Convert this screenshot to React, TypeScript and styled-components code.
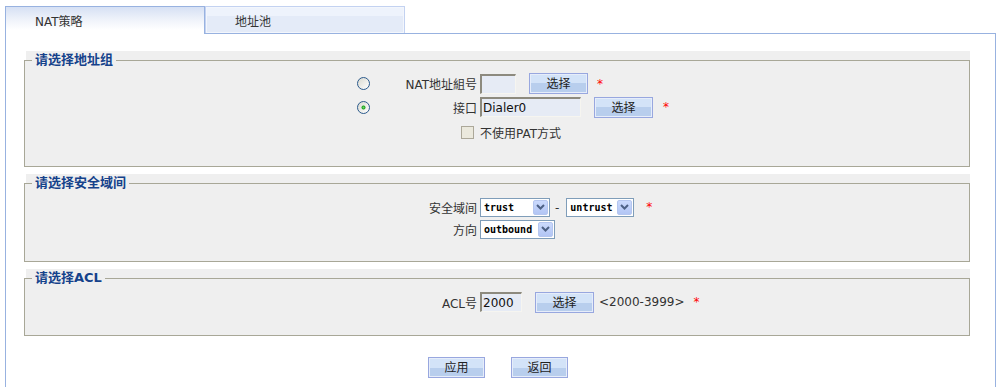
import React from 'react';
import styled, { createGlobalStyle } from 'styled-components';

const GlobalStyle = createGlobalStyle`
  html, body {
    margin: 0;
    padding: 0;
    overflow: hidden;
    background: #fff;
  }
  body {
    font-family: "DejaVu Sans", "Noto Sans CJK SC", sans-serif;
    font-size: 12px;
    color: #333;
  }
`;

const Page = styled.div`
  padding-top: 6px;
`;

const TabBar = styled.div`
  display: flex;
  height: 27px;
  padding-left: 5px;
`;

const Tab = styled.div<{ $active?: boolean }>`
  box-sizing: border-box;
  width: 200px;
  height: ${p => (p.$active ? '28px' : '27px')};
  padding-left: ${p => (p.$active ? '29px' : '29px')};
  border: 1px solid ${p => (p.$active ? '#98b2e0' : '#c3d2f1')};
  border-bottom: none;
  display: flex;
  align-items: center;
  position: relative;
  z-index: 1;
  color: #333;
  background: ${p =>
    p.$active
      ? 'linear-gradient(#d6e0f4 0%, #eef2fa 45%, #ffffff 85%)'
      : 'linear-gradient(#eef3fc 0 33%, #e4ebf8 33% 100%)'};
  box-shadow: ${p => (p.$active ? 'none' : 'inset 0 0 0 1px #f3f6fc')};
`;

const Panel = styled.div`
  box-sizing: border-box;
  width: 991px;
  margin-left: 5px;
  border: 1px solid #98b2e0;
  padding: 17px 25px 30px 20px;
`;

const Section = styled.div`
  background: #efefef;
  margin-bottom: 7px;
`;

const Fieldset = styled.fieldset<{ $pt: number; $pb: number }>`
  margin: 0 0 0 -2px;
  min-width: 0;
  padding: ${p => p.$pt}px 0 ${p => p.$pb}px 0;
  border: 1px solid #a8a797;
  background: #efefef;
`;

const Legend = styled.legend`
  margin-left: 7px;
  padding: 0 3px;
  font-size: 13px;
  line-height: 18px;
  font-weight: bold;
  color: #15428b;
`;

const Row = styled.div<{ $radio?: boolean; $h: number }>`
  display: grid;
  grid-template-columns: ${p => (p.$radio ? '332px 13px 110px 1fr' : '455px 1fr')};
  align-items: center;
  height: ${p => p.$h}px;
`;

const Label = styled.div<{ $pr?: number }>`
  text-align: right;
  padding-right: ${p => p.$pr ?? 3}px;
  white-space: nowrap;
  display: flex;
  justify-content: flex-end;
  align-items: center;
`;

const Controls = styled.div`
  display: flex;
  align-items: center;
  white-space: nowrap;
`;

const Radio = styled.span<{ $checked?: boolean }>`
  box-sizing: border-box;
  width: 13px;
  height: 13px;
  border-radius: 50%;
  border: 1px solid #2b5a8c;
  background: ${p =>
    p.$checked
      ? 'radial-gradient(circle, #6ada6a 0, #21a121 1.6px, transparent 2.4px), linear-gradient(135deg, #d9d9d0, #ffffff)'
      : 'linear-gradient(135deg, #d9d9d0, #ffffff)'};
`;

const Checkbox = styled.span`
  box-sizing: border-box;
  width: 13px;
  height: 13px;
  border: 1px solid #aca899;
  background: #ebe9dd;
`;

const TextInput = styled.div<{ $w: number }>`
  box-sizing: border-box;
  width: ${p => p.$w}px;
  height: 20px;
  border-style: solid;
  border-width: 2px 1px 1px 2px;
  border-color: #8d8a7e #f6f5f0 #f6f5f0 #8d8a7e;
  background: #e6ebf5;
  padding: 0 1px;
  display: flex;
  align-items: center;
  color: #111;
  font-size: 12px;
`;

const Button = styled.button<{ $w?: number; $ml?: number }>`
  box-sizing: border-box;
  width: ${p => p.$w ?? 59}px;
  height: 21px;
  margin-left: ${p => p.$ml ?? 13}px;
  padding: 0 0 2px;
  border: 1px solid #98a7df;
  background: linear-gradient(#d3e3f8 0 50%, #b8ceed 50% 100%);
  box-shadow: inset 0 0 0 1px #e6edfa;
  font-family: "DejaVu Sans", "Noto Sans CJK SC", sans-serif;
  font-size: 12px;
  color: #222;
`;

const Star = styled.span<{ $ml?: number }>`
  margin-left: ${p => p.$ml ?? 9}px;
  color: #f00;
`;

const Note = styled.span`
  margin-left: 5px;
  color: #333;
`;

const Dash = styled.span`
  margin: 2px 7px 0 5px;
  color: #333;
`;

const SelectBox = styled.div<{ $w: number }>`
  box-sizing: border-box;
  width: ${p => p.$w}px;
  height: 19px;
  border: 1px solid #7f9db9;
  background: #fff;
  padding: 1px 1px 1px 3px;
  display: flex;
  align-items: center;
  justify-content: space-between;
  font-family: "DejaVu Sans Mono", monospace;
  font-size: 10px;
  font-weight: bold;
  color: #000;
`;

const ArrowBox = styled.span`
  box-sizing: border-box;
  width: 15px;
  height: 15px;
  border: 1px solid #b5c6ef;
  border-radius: 2px;
  background: linear-gradient(#cbdafd, #b2c5f4);
  display: flex;
  align-items: center;
  justify-content: center;
`;

const Footer = styled.div`
  display: flex;
  justify-content: center;
  gap: 26px;
  width: 944px;
  padding-top: 14px;
`;

const Select: React.FC<{ value: string; width: number }> = ({ value, width }) => (
  <SelectBox $w={width}>
    <span>{value}</span>
    <ArrowBox>
      <svg width="9" height="6" viewBox="0 0 9 6">
        <path d="M1 1 L4.5 4.5 L8 1" fill="none" stroke="#4d6185" strokeWidth="2" />
      </svg>
    </ArrowBox>
  </SelectBox>
);

const App: React.FC = () => (
  <Page>
    <GlobalStyle />
    <TabBar>
      <Tab $active>NAT策略</Tab>
      <Tab>地址池</Tab>
    </TabBar>
    <Panel>
      <Section>
        <Fieldset $pt={3} $pb={20}>
          <Legend>请选择地址组</Legend>
          <Row $radio $h={23}>
            <span />
            <Radio />
            <Label>NAT地址組号</Label>
            <Controls>
              <TextInput $w={36} />
              <Button>选择</Button>
              <Star>*</Star>
            </Controls>
          </Row>
          <Row $radio $h={24}>
            <span />
            <Radio $checked />
            <Label>接口</Label>
            <Controls>
              <TextInput $w={101}>Dialer0</TextInput>
              <Button>选择</Button>
              <Star $ml={10}>*</Star>
            </Controls>
          </Row>
          <Row $radio $h={27}>
            <span />
            <span />
            <Label $pr={6}>
              <Checkbox />
            </Label>
            <Controls>不使用PAT方式</Controls>
          </Row>
        </Fieldset>
      </Section>

      <Section>
        <Fieldset $pt={4} $pb={21}>
          <Legend>请选择安全域间</Legend>
          <Row $h={22}>
            <Label>安全域间</Label>
            <Controls>
              <Select value="trust" width={70} />
              <Dash>-</Dash>
              <Select value="untrust" width={68} />
              <Star $ml={12}>*</Star>
            </Controls>
          </Row>
          <Row $h={22}>
            <Label>方向</Label>
            <Controls>
              <Select value="outbound" width={75} />
            </Controls>
          </Row>
        </Fieldset>
      </Section>

      <Section>
        <Fieldset $pt={4} $pb={22}>
          <Legend>请选择ACL</Legend>
          <Row $h={22}>
            <Label>ACL号</Label>
            <Controls>
              <TextInput $w={42}>2000</TextInput>
              <Button>选择</Button>
              <Note>&lt;2000-3999&gt;</Note>
              <Star>*</Star>
            </Controls>
          </Row>
        </Fieldset>
      </Section>

      <Footer>
        <Button $w={57} $ml={0}>应用</Button>
        <Button $w={57} $ml={0}>返回</Button>
      </Footer>
    </Panel>
  </Page>
);

export default App;
